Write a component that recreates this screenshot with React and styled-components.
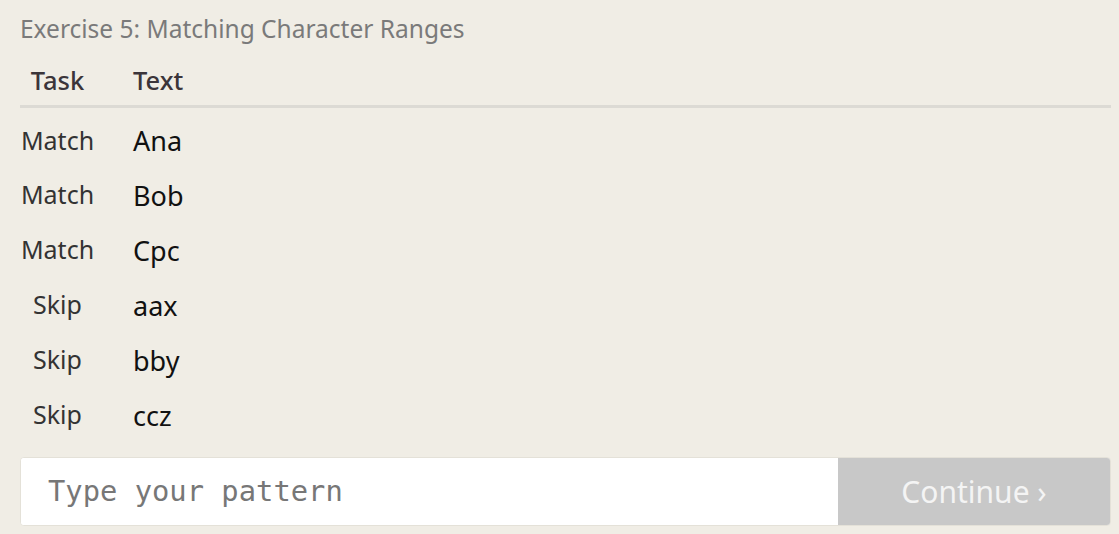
import React from 'react';
import styled, { createGlobalStyle } from 'styled-components';

const Global = createGlobalStyle`
  html, body {
    margin: 0;
    background: #f0ede5;
  }
  body {
    font-family: "Noto Sans", "Open Sans", sans-serif;
  }
`;

const Page = styled.div`
  padding: 12px 8px 0 20px;
  width: 1091px;
`;

const Title = styled.div`
  color: #7a7a7a;
  font-size: 24.5px;
  line-height: 34px;
  margin-bottom: 17px;
`;

const Table = styled.table`
  width: 100%;
  border-collapse: collapse;
`;

const HeadCell = styled.th`
  text-align: ${({ $align }) => $align || 'left'};
  font-weight: 500;
  font-size: 25.5px;
  line-height: 34px;
  color: #3b353a;
  padding: 0 0 8px ${({ $pad }) => $pad || 0}px;
  width: ${({ $w }) => $w || 'auto'};
  border-bottom: 3px solid #dcdad4;
`;

const Row = styled.tr`
  height: 55px;
`;

const TaskCell = styled.td`
  text-align: center;
  font-size: 25px;
  color: #333;
  vertical-align: middle;
  padding: 10px 0 0 0;
`;

const TextCell = styled.td`
  font-size: 27px;
  color: #111;
  vertical-align: middle;
  padding: 12px 0 0 38px;
`;

const Bar = styled.div`
  box-sizing: border-box;
  margin-top: 20px;
  display: flex;
  height: 69px;
  border: 1px solid #e4e1d8;
  border-radius: 4px;
  overflow: hidden;
  background: #fff;
`;

const Input = styled.input`
  flex: 1;
  border: none;
  outline: none;
  background: #fff;
  padding: 0 0 0 27px;
  font-family: "DejaVu Sans Mono", "Liberation Mono", monospace;
  font-size: 28.8px;
  color: #333;
  &::placeholder {
    color: #777;
  }
`;

const Button = styled.button`
  width: 272px;
  border: none;
  background: #c8c8c8;
  color: #f4f4f4;
  font-family: "Noto Sans", "Open Sans", sans-serif;
  font-size: 30px;
  padding: 0;
`;

const rows = [
  ['Match', 'Ana'],
  ['Match', 'Bob'],
  ['Match', 'Cpc'],
  ['Skip', 'aax'],
  ['Skip', 'bby'],
  ['Skip', 'ccz'],
];

export default function App() {
  return (
    <>
      <Global />
      <Page>
        <Title>Exercise 5: Matching Character Ranges</Title>
        <Table>
          <thead>
            <tr>
              <HeadCell $align="center" $w="75px">Task</HeadCell>
              <HeadCell $pad={38}>Text</HeadCell>
            </tr>
          </thead>
          <tbody>
            {rows.map(([task, text], i) => (
              <Row key={i}>
                <TaskCell>{task}</TaskCell>
                <TextCell>{text}</TextCell>
              </Row>
            ))}
          </tbody>
        </Table>
        <Bar>
          <Input placeholder="Type your pattern" />
          <Button>Continue ›</Button>
        </Bar>
      </Page>
    </>
  );
}
